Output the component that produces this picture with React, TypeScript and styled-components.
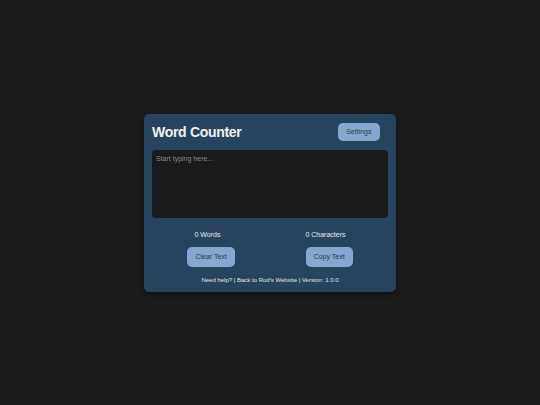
import React, { useState } from 'react';
import styled, { createGlobalStyle } from 'styled-components';

const GlobalStyle = createGlobalStyle`
  html, body {
    margin: 0;
    padding: 0;
    background: #1b1b1b;
  }
  body {
    font-family: 'Liberation Sans', Arial, sans-serif;
  }
`;

const Page = styled.div`
  width: 100vw;
  height: 100vh;
  display: flex;
  align-items: center;
  justify-content: center;
  background: #1b1b1b;
`;

const Card = styled.div`
  width: 252px;
  box-sizing: border-box;
  padding: 8px 8px 7px;
  background: #27435d;
  border-radius: 5px;
  box-shadow: 0 2px 6px rgba(0, 0, 0, 0.45);
  display: flex;
  flex-direction: column;
  color: #ececec;
`;

const Header = styled.div`
  height: 20px;
  display: flex;
  align-items: center;
  justify-content: space-between;
  padding-right: 8px;
  margin-bottom: 8px;
`;

const Title = styled.h1`
  margin: 0;
  font-size: 14px;
  letter-spacing: -0.3px;
  line-height: 20px;
  font-weight: 700;
  color: #f2f2f2;
`;

const Button = styled.button<{ $tall?: boolean }>`
  height: ${(p) => (p.$tall ? '20px' : '18px')};
  padding: 0 ${(p) => (p.$tall ? '8px' : '8.5px')};
  border: 0;
  border-radius: 5px;
  background: #87a6d1;
  color: #2c3a4a;
  font-family: inherit;
  font-size: 7px;
  cursor: pointer;
`;

const TextArea = styled.textarea`
  display: block;
  width: 100%;
  height: 68px;
  box-sizing: border-box;
  margin: 0 0 10px;
  padding: 5px 4px;
  border: 0;
  border-radius: 4px;
  background: #1b1b1b;
  color: #e0e0e0;
  font-family: inherit;
  font-size: 7px;
  resize: none;
  outline: none;
  &::placeholder {
    color: #8a8a8a;
  }
`;

const Row = styled.div<{ $gap: number }>`
  display: flex;
  justify-content: space-around;
  align-items: center;
  margin-bottom: ${(p) => p.$gap}px;
`;

const Stat = styled.span`
  font-size: 7px;
  line-height: 14px;
`;

const Footer = styled.div`
  text-align: center;
  font-size: 6px;
  line-height: 10px;
  color: #e6e6e6;
`;

export default function App() {
  const [text, setText] = useState('');
  const words = text.trim() ? text.trim().split(/\s+/).length : 0;

  return (
    <>
      <GlobalStyle />
      <Page>
        <Card>
          <Header>
            <Title>Word Counter</Title>
            <Button>Settings</Button>
          </Header>
          <TextArea
            placeholder="Start typing here..."
            value={text}
            onChange={(e) => setText(e.target.value)}
          />
          <Row $gap={5}>
            <Stat>{words} Words</Stat>
            <Stat>{text.length} Characters</Stat>
          </Row>
          <Row $gap={8}>
            <Button $tall onClick={() => setText('')}>Clear Text</Button>
            <Button $tall>Copy Text</Button>
          </Row>
          <Footer>Need help? | Back to Rod's Website | Version: 1.0.0</Footer>
        </Card>
      </Page>
    </>
  );
}
